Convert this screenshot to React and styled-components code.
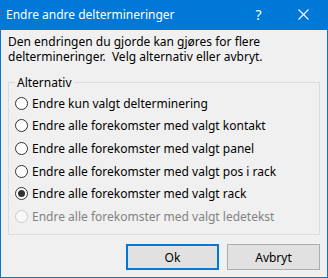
import React from "react";
import styled, { createGlobalStyle } from "styled-components";

const Global = createGlobalStyle`
  html, body { margin: 0; padding: 0; background: #f0f0f0; }
  * { box-sizing: border-box; }
`;

const Window = styled.div`
  width: 328px;
  height: 278px;
  display: flex;
  flex-direction: column;
  background: #f0f0f0;
  border: 1px solid #0078d7;
  border-top: none;
  font-family: "Noto Sans", "Open Sans", sans-serif;
  font-size: 12px;
  color: #000;
`;

const TitleBar = styled.div`
  height: 30px;
  flex: none;
  margin: 0 -1px;
  padding: 0 2px 2px 6px;
  background: #0078d7;
  color: #fff;
  display: flex;
  align-items: center;
`;

const Title = styled.div`
  flex: 1;
  font-size: 12px;
`;

const TitleButton = styled.div`
  width: 45px;
  height: 28px;
  display: flex;
  align-items: center;
  justify-content: center;
  font-size: 14px;
`;

const Body = styled.div`
  flex: 1;
  display: flex;
  flex-direction: column;
  padding: 4px 7px 0 7px;
`;

const Message = styled.div`
  display: flex;
  flex-direction: column;
`;

const Line = styled.span`
  height: 15px;
  line-height: 15px;
  white-space: nowrap;
`;

const Group = styled.fieldset`
  margin: 11px 0 0 0;
  padding: 0 6px 8px 6px;
  border: 1px solid #dcdcdc;
  height: 160px;
`;

const Legend = styled.legend`
  padding: 0 2px;
  line-height: 15px;
`;

const Options = styled.div`
  display: flex;
  flex-direction: column;
  padding-top: 2px;
`;

const Option = styled.label`
  display: flex;
  align-items: center;
  height: 22.6px;
  gap: 4px;
  color: ${(p) => (p.$disabled ? "#838383" : "#000")};
`;

const Radio = styled.span`
  width: 13px;
  height: 13px;
  border-radius: 50%;
  border: 1px solid ${(p) => (p.$disabled ? "#cccccc" : "#333333")};
  background: ${(p) => (p.$disabled ? "#f8f8f8" : "#fff")};
  display: flex;
  align-items: center;
  justify-content: center;
  flex: none;
  &::after {
    content: "";
    width: 7px;
    height: 7px;
    border-radius: 50%;
    background: #333;
    display: ${(p) => (p.$checked ? "block" : "none")};
  }
`;

const Buttons = styled.div`
  display: flex;
  justify-content: flex-end;
  gap: 8px;
  margin-top: 9px;
`;

const Button = styled.div`
  width: 93px;
  height: 26px;
  display: flex;
  align-items: center;
  justify-content: center;
  background: #e1e1e1;
  border: ${(p) => (p.$default ? "2px solid #0078d7" : "1px solid #adadad")};
`;

const options = [
  "Endre kun valgt delterminering",
  "Endre alle forekomster med valgt kontakt",
  "Endre alle forekomster med valgt panel",
  "Endre alle forekomster med valgt pos i rack",
  "Endre alle forekomster med valgt rack",
  "Endre alle forekomster med valgt ledetekst",
];

export default function App() {
  return (
    <>
      <Global />
      <Window>
        <TitleBar>
          <Title>Endre andre deltermineringer</Title>
          <TitleButton>?</TitleButton>
          <TitleButton>
            <svg width="11" height="11" viewBox="0 0 11 11">
              <path d="M0.5 0.5 L10.5 10.5 M10.5 0.5 L0.5 10.5" stroke="#fff" strokeWidth="1.1" />
            </svg>
          </TitleButton>
        </TitleBar>
        <Body>
          <Message>
            <Line>Den endringen du gjorde kan gjøres for flere</Line>
            <Line>deltermineringer.&nbsp; Velg alternativ eller avbryt.</Line>
          </Message>
          <Group>
            <Legend>Alternativ</Legend>
            <Options>
              {options.map((o, i) => (
                <Option key={o} $disabled={i === 5}>
                  <Radio $checked={i === 4} $disabled={i === 5} />
                  {o}
                </Option>
              ))}
            </Options>
          </Group>
          <Buttons>
            <Button $default>Ok</Button>
            <Button>Avbryt</Button>
          </Buttons>
        </Body>
      </Window>
    </>
  );
}
